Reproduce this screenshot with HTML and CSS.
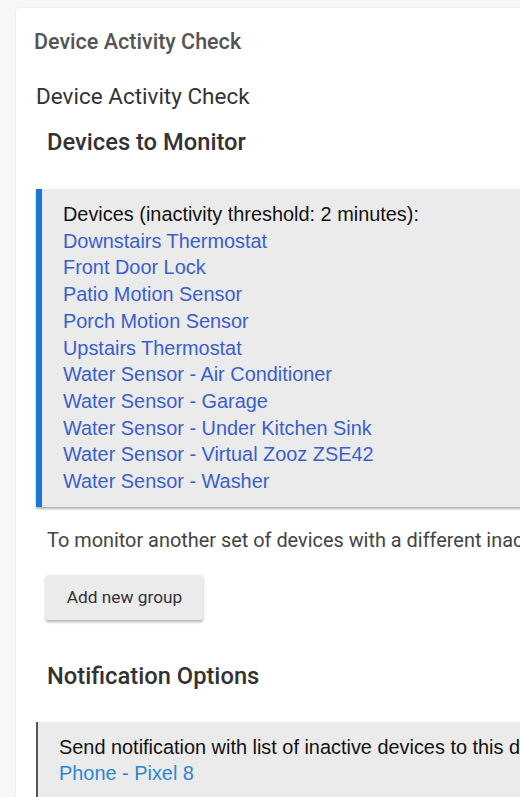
FILE: index.html
```html
<!DOCTYPE html>
<html lang="en">
<head>
  <meta charset="UTF-8" />
  <meta name="viewport" content="width=device-width, initial-scale=1.0" />
  <title>Device Activity Check</title>
  <link rel="stylesheet" href="styles.css">
</head>
<body>
  <div class="card">
    <div class="card-title">Device Activity Check</div>

    <div class="page">
      <h1 class="app-name">Device Activity Check</h1>

      <h2 class="section">Devices to Monitor</h2>
      <div class="input-box blue">
        <div class="label">Devices (inactivity threshold: 2 minutes):</div>
        <a href="#">Downstairs Thermostat</a>
        <a href="#">Front Door Lock</a>
        <a href="#">Patio Motion Sensor</a>
        <a href="#">Porch Motion Sensor</a>
        <a href="#">Upstairs Thermostat</a>
        <a href="#">Water Sensor - Air Conditioner</a>
        <a href="#">Water Sensor - Garage</a>
        <a href="#">Water Sensor - Under Kitchen Sink</a>
        <a href="#">Water Sensor - Virtual Zooz ZSE42</a>
        <a href="#">Water Sensor - Washer</a>
      </div>

      <p class="note">To monitor another set of devices with a different inactivity threshold, add a new group.</p>
      <button class="btn">Add new group</button>

      <h2 class="section notify">Notification Options</h2>
      <div class="input-box gray">
        <div class="label">Send notification with list of inactive devices to this device:</div>
        <a href="#" class="light">Phone - Pixel 8</a>
      </div>
    </div>
  </div>
</body>
</html>
```

FILE: styles.css
```css
html {
  overflow: hidden;
}
body {
  margin: 0;
  padding: 8px 0 40px 16px;
  background: #f7f7f7;
  font-family: Roboto, "Liberation Sans", sans-serif;
  color: #333;
}
.card {
  width: 1000px;
  background: #fff;
  border-radius: 4px;
  box-shadow: 0 0 3px rgba(0,0,0,0.08);
  padding: 22px 0 40px;
}
.card-title {
  padding-left: 18px;
  font-family: "Roboto Medium", Roboto, sans-serif;
  font-size: 21.5px;
  line-height: 24px;
  font-weight: 500;
  color: #555;
}
.page {
  padding-left: 20px;
}
.app-name {
  margin: 28px 0 0;
  font-size: 22.5px;
  line-height: 28px;
  font-weight: 400;
  color: #333;
}
.section {
  margin: 18px 0 0 11px;
  font-family: "Roboto Medium", Roboto, sans-serif;
  font-size: 23.7px;
  line-height: 28px;
  font-weight: 500;
  color: #333;
}
.section.notify {
  margin-top: 42px;
}
.input-box {
  margin-top: 33px;
  background: #ebebeb;
  padding: 12px 0 12px 21px;
  font-family: "Liberation Sans", Arial, sans-serif;
  font-size: 19.9px;
  line-height: 26.7px;
  color: #111;
  box-shadow: 0 2px 2px rgba(0,0,0,0.3);
  display: flex;
  flex-direction: column;
  align-items: flex-start;
}
.input-box.blue {
  border-left: 6px solid #1976d2;
}
.input-box.gray {
  margin-top: 32px;
  border-left: 2px solid #555;
  box-shadow: none;
}
.input-box a {
  color: #3b5fc9;
  text-decoration: none;
  white-space: nowrap;
}
.input-box .label {
  white-space: nowrap;
}
.input-box a.light {
  color: #2b86d6;
}
.note {
  margin: 22px 0 0 11px;
  font-size: 19.9px;
  line-height: 24px;
  color: #444;
  white-space: nowrap;
}
.btn {
  margin: 22px 0 0 10px;
  width: 157px;
  height: 45px;
  border: none;
  border-radius: 2px;
  background: #ebebeb;
  font-family: Roboto, sans-serif;
  font-size: 17.3px;
  color: #333;
  box-shadow: 0 2px 3px rgba(0,0,0,0.3);
  cursor: pointer;
}
```
